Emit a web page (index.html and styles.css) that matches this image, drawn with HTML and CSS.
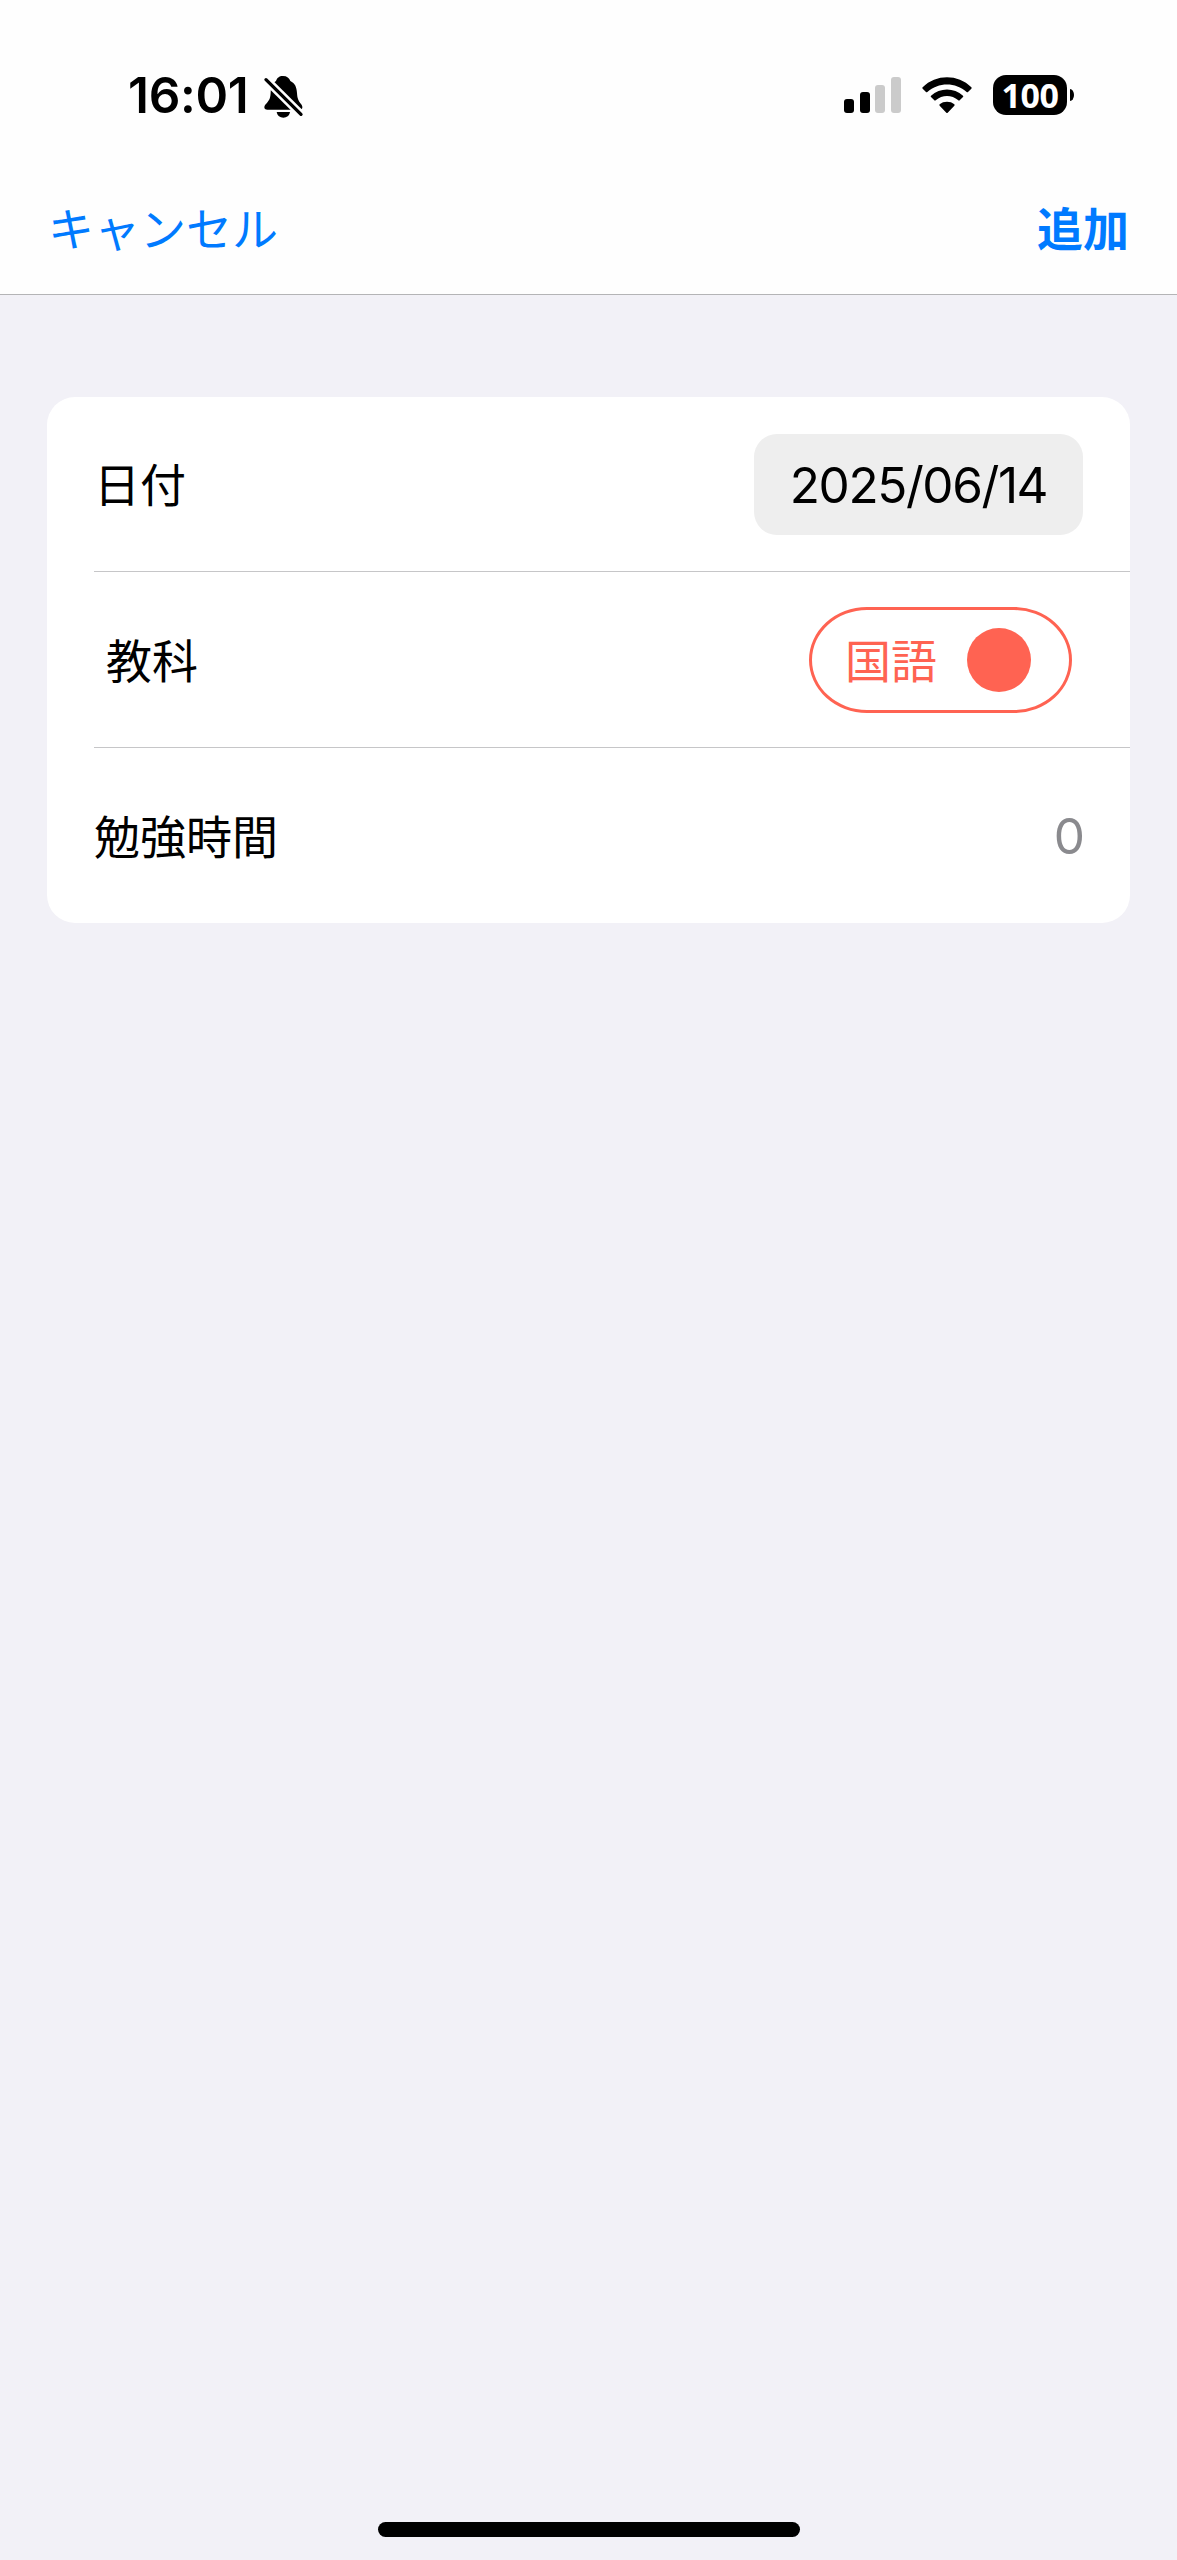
FILE: index.html
```html
<!DOCTYPE html>
<html lang="ja">
    <head>
        <meta charset="utf-8">
        <title>追加</title>
        <link rel="stylesheet" href="styles.css">
    </head>

    <body>
        <header class="header">
            <!--Status bar: clock, signal, wifi, battery-->
            <div class="status_bar">
                <div class="status_left">
                    <span class="clock">16:01</span>
                    <svg class="bell" viewBox="0 0 123 129">
                        <path d="M60 3C48 3 42 9 39 18C27 25 24 37 23 53C22 73 17 77 8 88C1 97 4 104 13 104H109C119 104 121 96 114 87C106 77 103 71 102 54C101 36 96 25 82 18C79 9 72 3 60 3Z"/>
                        <path d="M41 111H81C79 122 71 128 61 128S43 122 41 111Z"/>
                        <path class="slash_gap" d="M2 7L120 124"/>
                        <path class="slash" d="M9 14L114 118"/>
                    </svg>
                </div>
                <div class="status_right">
                    <div class="signal">
                        <i class="bar bar1"></i>
                        <i class="bar bar2"></i>
                        <i class="bar bar3 off"></i>
                        <i class="bar bar4 off"></i>
                    </div>
                    <svg class="wifi" viewBox="0 0 150 111">
                        <path d="M2 31C42 -9 108 -9 148 31Q150 33 148 35L138 45Q136 47 134 45C101 15 49 15 16 45Q14 47 12 45L2 35Q0 33 2 31Z"/>
                        <path d="M27 56C54 31 96 31 123 56Q125 58 123 60L113 70Q111 72 109 70C89 53 61 53 41 70Q39 72 37 70L27 60Q25 58 27 56Z"/>
                        <path d="M53 82C65 72 85 72 97 82Q99 84 97 86L77 107Q75 109 73 107L53 86Q51 84 53 82Z"/>
                    </svg>
                    <div class="battery">
                        <span class="battery_body">100</span>
                        <i class="battery_tip"></i>
                    </div>
                </div>
            </div>
            <nav class="nav">
                <span class="cancel">キャンセル</span>
                <span class="add">追加</span>
            </nav>
        </header>

        <!--Input form-->
        <main class="form">
            <div class="row">
                <span class="label">日付</span>
                <span class="date">2025/06/14</span>
            </div>
            <div class="row subject_row">
                <span class="label">教科</span>
                <span class="subject">
                    <span class="label">国語</span>
                    <i class="subject_dot"></i>
                </span>
            </div>
            <div class="row">
                <span class="label">勉強時間</span>
                <span class="minutes">0</span>
            </div>
        </main>

        <div class="home_bar"></div>
    </body>
</html>
```

FILE: styles.css
```css
/*blue: #007aff*/
/*red: #ff6352*/
* {
    box-sizing: border-box;
}
body {
    display: flex;
    flex-direction: column;
    margin: 0;
    height: 2560px;
    background-color: #f2f1f7;
    color: black;
    font-family: Inter, "Noto Sans CJK JP", sans-serif;
    font-size: 46px;
}
.header {
    height: 295px;
    background-color: #fefefe;
    border-bottom: 1px solid #b4b4b6;
}
/*Status bar*/
.status_bar {
    display: flex;
    justify-content: space-between;
    height: 165px;
    padding: 60px 103px 35px 128px;
}
.status_left, .status_right {
    display: flex;
    align-items: center;
    height: 70px;
}
.clock {
    width: 135px;
    font-size: 49.5px;
    font-weight: 600;
    letter-spacing: -0.3px;
}
.bell {
    width: 41px;
    height: 43px;
    margin-top: 2px;
}
.slash, .slash_gap {
    fill: none;
    stroke: black;
    stroke-width: 10;
    stroke-linecap: round;
}
.slash_gap {
    stroke: #fefefe;
    stroke-width: 25;
    stroke-linecap: butt;
}
.signal {
    display: flex;
    align-items: flex-end;
    gap: 5.7px;
    height: 36px;
}
.bar {
    width: 10px;
    border-radius: 3px;
    background-color: black;
}
.bar1 {
    height: 14px;
}
.bar2 {
    height: 21px;
}
.bar3 {
    height: 28px;
}
.bar4 {
    height: 36px;
}
.off {
    background-color: #cbcbcb;
}
.wifi {
    width: 50px;
    height: 37px;
    margin-left: 21px;
}
.battery {
    display: flex;
    align-items: center;
    gap: 3px;
    margin-left: 21px;
}
.battery_body {
    width: 74px;
    height: 40px;
    border-radius: 13px;
    background-color: black;
    color: white;
    font-family: "Noto Sans", sans-serif;
    font-size: 34px;
    font-weight: 700;
    line-height: 40px;
    letter-spacing: -0.5px;
    text-align: center;
}
.battery_tip {
    width: 4px;
    height: 12px;
    border-radius: 0 4px 4px 0 / 0 6px 6px 0;
    background-color: black;
}
/*Cancel and add*/
.nav {
    display: flex;
    justify-content: space-between;
    padding: 30px 48px 0;
    line-height: 68px;
    color: #007aff;
}
.add {
    font-weight: 700;
}
/*White card with three rows*/
.form {
    margin: 102px 47px 0;
    height: 526px;
    border-radius: 28px;
    background-color: white;
}
.row {
    display: flex;
    align-items: center;
    justify-content: space-between;
    height: 175px;
    margin-left: 47px;
    padding-right: 47px;
    border-bottom: 1px solid #c6c6c8;
}
.row:last-child {
    border-bottom: none;
}
.label {
    padding-bottom: 4px;
}
.date {
    width: 329px;
    height: 101px;
    border-radius: 23px;
    background-color: #eeeeee;
    font-size: 49.5px;
    line-height: 102px;
    letter-spacing: -1.4px;
    text-align: center;
}
.subject_row {
    height: 176px;
    padding-left: 12px;
    padding-right: 58px;
}
.subject {
    display: flex;
    align-items: center;
    justify-content: space-between;
    width: 263px;
    height: 106px;
    padding: 0 38px 0 33px;
    border: 3px solid #ff6352;
    border-radius: 58px / 53px;
    color: #ff6352;
}
.subject_dot {
    width: 64px;
    height: 64px;
    border-radius: 50%;
    background-color: #ff6352;
}
.minutes {
    margin-right: -2px;
    color: #8a8a8e;
    font-size: 49.5px;
}
/*Home indicator*/
.home_bar {
    width: 422px;
    height: 15px;
    margin: auto auto 23px;
    border-radius: 8px;
    background-color: black;
}
```
